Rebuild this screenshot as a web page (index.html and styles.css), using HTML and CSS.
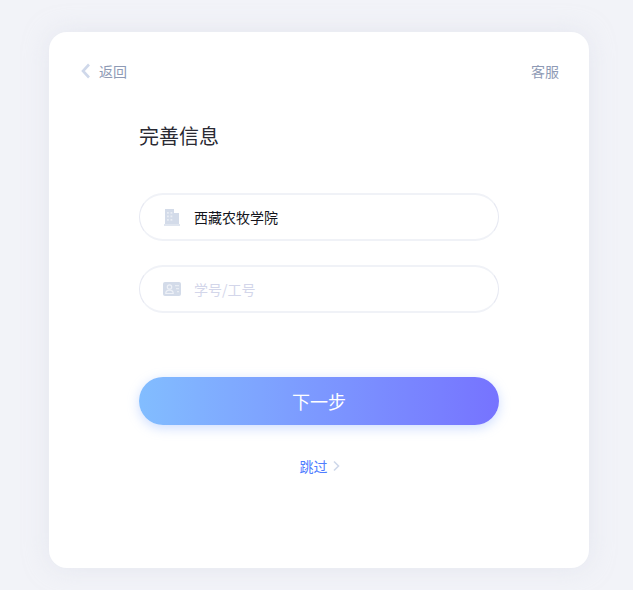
FILE: index.html
```html
<!DOCTYPE html>
<html>
<head>
<meta name="viewport" content="width=device-width, initial-scale=1">
<link rel="stylesheet" href="styles.css">
</head>
<body>

<div class="card">
  <div class="top">
    <a class="back">
      <svg class="back__icon" width="10" height="16" viewBox="0 0 10 16"><path d="M8 1.500 2 8l6 6.500" fill="none" stroke="#cfd8ea" stroke-width="2.600"/></svg>
      返回
    </a>
    <a class="service">客服</a>
  </div>

  <div class="form">
    <h1>完善信息</h1>

    <div class="field">
      <svg class="field__icon" width="18" height="18" viewBox="0 0 18 18">
        <path d="M2 1h9v15H2zM11 5h5v11h-5z" fill="#d3dbe9"/>
        <path d="M1 16h16v2H1z" fill="#dfe5ef"/>
        <path d="M4 4h1.800v1.800H4zM7.500 4h1.800v1.800H7.500zM4 7.500h1.800v1.800H4zM7.500 7.500h1.800v1.800H7.500zM4 11h1.800v1.800H4zM7.500 11h1.800v1.800H7.500z" fill="#e9edf4"/>
      </svg>
      <input class="field__input" type="text" value="西藏农牧学院">
    </div>

    <div class="field">
      <svg class="field__icon" width="18" height="18" viewBox="0 0 18 18">
        <rect y="2" width="18" height="14" rx="2" fill="#d3dbe9"/>
        <circle cx="6.500" cy="7" r="2.200" fill="none" stroke="#eef1f7" stroke-width="1.200"/>
        <path d="M2.800 13.500c0-2.300 1.600-3.400 3.700-3.400s3.700 1.100 3.700 3.400z" fill="none" stroke="#eef1f7" stroke-width="1.200"/>
        <path d="M12 5h4v1.200h-4zM13 8h3v1.200h-3zM14 11h2v1.200h-2z" fill="#e9edf4"/>
      </svg>
      <input class="field__input" type="text" placeholder="学号/工号">
    </div>

    <button class="button">下一步</button>

    <a class="skip">
      <span class="skip__text">跳过</span>
      <svg width="9" height="12" viewBox="0 0 9 12"><path d="M2 1.500 6.500 6 2 10.500" fill="none" stroke="#cfd8ea" stroke-width="1.600"/></svg>
    </a>
  </div>
</div>

</body>
</html>
```

FILE: styles.css
```css
* {
  box-sizing: border-box;
}

body {
  margin: 0;
  height: 590px;
  padding: 32px 44px 22px 49px;
  overflow: hidden;
  background: #f2f3f8;
  font-family: "Noto Sans CJK SC", "Liberation Sans", sans-serif;
}

.card {
  width: 540px;
  height: 536px;
  padding: 29px 30px 0 32px;
  background: #fff;
  border-radius: 18px;
  box-shadow: 0 0 24px 0 rgba(216, 220, 232, 0.5);
}

.top {
  display: flex;
  justify-content: space-between;
  align-items: center;
  height: 20px;
  font-size: 14px;
  color: #8e9ab5;
}

.back {
  display: flex;
  align-items: center;
  gap: 8px;
}

.form {
  width: 360px;
  margin-left: 58px;
}

h1 {
  margin: 40px 0 42px;
  font-size: 20px;
  line-height: 30px;
  font-weight: 400;
  color: #2a2a33;
}

.field {
  display: flex;
  align-items: center;
  height: 48px;
  margin-bottom: 24px;
  padding: 0 23px;
  border-style: solid;
  border-width: 2px 1px;
  border-color: #f0f2f7 #e7e9f2;
  border-radius: 24px;
}

.field__icon {
  flex: none;
}

.field__input {
  flex: 1;
  min-width: 0;
  margin-left: 13px;
  padding: 0;
  border: none;
  outline: none;
  background: none;
  font-family: inherit;
  font-size: 14px;
  color: #14141c;
}

.field__input::placeholder {
  color: #d3d6ea;
}

.button {
  display: block;
  width: 100%;
  height: 48px;
  margin-top: 64px;
  border: none;
  border-radius: 24px;
  background: linear-gradient(90deg, #82bdff, #7673ff);
  box-shadow: 0 3px 12px 0 rgba(130, 170, 255, 0.4);
  font-family: inherit;
  font-size: 18px;
  color: #fff;
  cursor: pointer;
}

.skip {
  display: flex;
  justify-content: center;
  align-items: center;
  gap: 4px;
  height: 20px;
  margin-top: 31px;
  padding-left: 2px;
  font-size: 14px;
  cursor: pointer;
}

.skip__text {
  color: #4f7dff;
}
```
